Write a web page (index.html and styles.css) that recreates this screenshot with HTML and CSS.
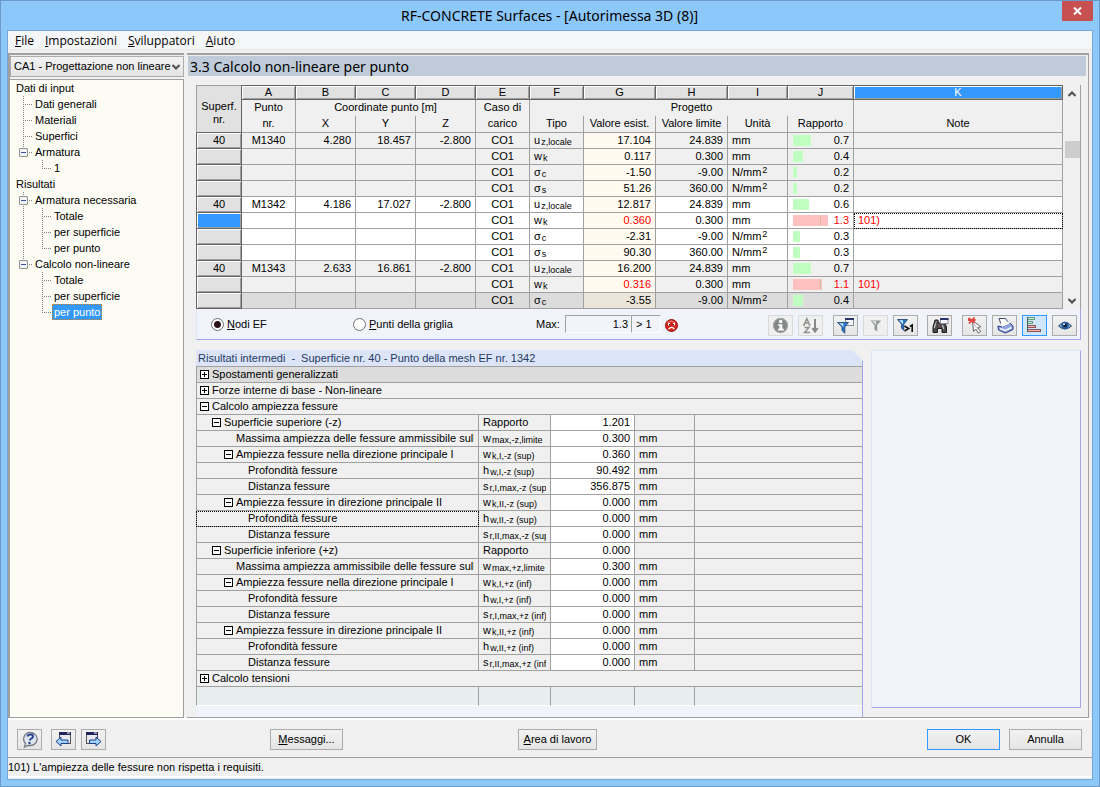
FILE: index.html
```html
<!DOCTYPE html>
<html lang="it">
<head>
<meta charset="utf-8">
<title>RF-CONCRETE Surfaces - [Autorimessa 3D (8)]</title>
<link rel="stylesheet" href="styles.css">
</head>
<body>
<div class="window">
  <header class="titlebar">
    <h1>RF-CONCRETE Surfaces - [Autorimessa 3D (8)]</h1>
    <button class="close" aria-label="Chiudi"><svg width="9" height="8" viewBox="0 0 9 8"><path d="M1 .5l7 7M8 .5l-7 7" stroke="#fff" stroke-width="2"/></svg></button>
  </header>
  <div class="client">
    <nav class="menu">
      <a href="#"><u>F</u>ile</a><a href="#"><u>I</u>mpostazioni</a><a href="#"><u>S</u>viluppatori</a><a href="#"><u>A</u>iuto</a>
    </nav>
    <div class="body">
      <aside class="side">
        <div class="combo">
          <select aria-label="Caso"><option>CA1 - Progettazione non lineare</option></select>
          <svg class="chev" width="8" height="6" viewBox="0 0 8 6"><path d="M.5 1L4 4.500 7.500 1" fill="none" stroke="#505050" stroke-width="2"/></svg>
        </div>
        <ul class="tree">
          <li>Dati di input</li>
          <li><i class="g v h"></i>Dati generali</li>
          <li><i class="g v h"></i>Materiali</li>
          <li><i class="g v h"></i>Superfici</li>
          <li><i class="g e h"><button class="exp" aria-label="Comprimi"></button></i>Armatura</li>
          <li><i class="g"></i><i class="g e h"></i>1</li>
          <li>Risultati</li>
          <li><i class="g v h"><button class="exp" aria-label="Comprimi"></button></i>Armatura necessaria</li>
          <li><i class="g v"></i><i class="g v h"></i>Totale</li>
          <li><i class="g v"></i><i class="g v h"></i>per superficie</li>
          <li><i class="g v"></i><i class="g e h"></i>per punto</li>
          <li><i class="g e h"><button class="exp" aria-label="Comprimi"></button></i>Calcolo non-lineare</li>
          <li><i class="g"></i><i class="g v h"></i>Totale</li>
          <li><i class="g"></i><i class="g v h"></i>per superficie</li>
          <li><i class="g"></i><i class="g e h"></i><span class="sel">per punto</span></li>
        </ul>
      </aside>
      <main class="main">
        <h2>3.3 Calcolo non-lineare per punto</h2>
        <section class="upper">
          <div class="gridwrap">
            <table class="grid">
              <colgroup><col class="c46"><col class="c54"><col class="c60"><col class="c60"><col class="c60"><col class="c54"><col class="c54"><col class="c72"><col class="c72"><col class="c60"><col class="c66"><col></colgroup>
              <thead>
                <tr class="letters"><th class="corner" rowspan="3">Superf.<br>nr.</th><th>A</th><th>B</th><th>C</th><th>D</th><th>E</th><th>F</th><th>G</th><th>H</th><th>I</th><th>J</th><th class="on">K</th></tr>
                <tr class="h1"><th>Punto</th><th colspan="3">Coordinate punto [m]</th><th>Caso di</th><th colspan="5">Progetto</th><th></th></tr>
                <tr class="h2"><th>nr.</th><th>X</th><th>Y</th><th>Z</th><th>carico</th><th>Tipo</th><th>Valore esist.</th><th>Valore limite</th><th>Unità</th><th>Rapporto</th><th>Note</th></tr>
              </thead>
              <tbody>
                <tr><th>40</th><td class="m">M1340</td><td>4.280</td><td>18.457</td><td>-2.800</td><td class="m">CO1</td><td class="l">u<sub>z,locale</sub></td><td class="y">17.104</td><td>24.839</td><td class="l">mm</td><td><div class="r"><b style="width:18px"></b>0.7</div></td><td class="l"></td></tr>
                <tr><th></th><td></td><td></td><td></td><td></td><td class="m">CO1</td><td class="l">w<sub>k</sub></td><td class="y">0.117</td><td>0.300</td><td class="l">mm</td><td><div class="r"><b style="width:10px"></b>0.4</div></td><td class="l"></td></tr>
                <tr><th></th><td></td><td></td><td></td><td></td><td class="m">CO1</td><td class="l">σ<sub>c</sub></td><td class="y">-1.50</td><td>-9.00</td><td class="l">N/mm<sup>2</sup></td><td><div class="r"><b style="width:4px"></b>0.2</div></td><td class="l"></td></tr>
                <tr><th></th><td></td><td></td><td></td><td></td><td class="m">CO1</td><td class="l">σ<sub>s</sub></td><td class="y">51.26</td><td>360.00</td><td class="l">N/mm<sup>2</sup></td><td><div class="r"><b style="width:4px"></b>0.2</div></td><td class="l"></td></tr>
                <tr class="w"><th>40</th><td class="m">M1342</td><td>4.186</td><td>17.027</td><td>-2.800</td><td class="m">CO1</td><td class="l">u<sub>z,locale</sub></td><td class="y">12.817</td><td>24.839</td><td class="l">mm</td><td><div class="r"><b style="width:16px"></b>0.6</div></td><td class="l"></td></tr>
                <tr class="w"><th class="on"></th><td></td><td></td><td></td><td></td><td class="m">CO1</td><td class="l">w<sub>k</sub></td><td class="y red">0.360</td><td>0.300</td><td class="l">mm</td><td class="red"><div class="r"><b class="over" style="width:35px"></b>1.3</div></td><td class="l red cur">101)</td></tr>
                <tr class="w"><th></th><td></td><td></td><td></td><td></td><td class="m">CO1</td><td class="l">σ<sub>c</sub></td><td class="y">-2.31</td><td>-9.00</td><td class="l">N/mm<sup>2</sup></td><td><div class="r"><b style="width:7px"></b>0.3</div></td><td class="l"></td></tr>
                <tr class="w"><th></th><td></td><td></td><td></td><td></td><td class="m">CO1</td><td class="l">σ<sub>s</sub></td><td class="y">90.30</td><td>360.00</td><td class="l">N/mm<sup>2</sup></td><td><div class="r"><b style="width:7px"></b>0.3</div></td><td class="l"></td></tr>
                <tr><th>40</th><td class="m">M1343</td><td>2.633</td><td>16.861</td><td>-2.800</td><td class="m">CO1</td><td class="l">u<sub>z,locale</sub></td><td class="y">16.200</td><td>24.839</td><td class="l">mm</td><td><div class="r"><b style="width:18px"></b>0.7</div></td><td class="l"></td></tr>
                <tr><th></th><td></td><td></td><td></td><td></td><td class="m">CO1</td><td class="l">w<sub>k</sub></td><td class="y red">0.316</td><td>0.300</td><td class="l">mm</td><td class="red"><div class="r"><b class="over" style="width:29px"></b>1.1</div></td><td class="l red">101)</td></tr>
                <tr class="d"><th></th><td></td><td></td><td></td><td></td><td class="m">CO1</td><td class="l">σ<sub>c</sub></td><td class="y">-3.55</td><td>-9.00</td><td class="l">N/mm<sup>2</sup></td><td><div class="r"><b style="width:10px"></b>0.4</div></td><td class="l"></td></tr>
              </tbody>
            </table>
            <div class="scroll">
              <svg width="8" height="6" viewBox="0 0 8 6"><path d="M.5 5L4 1.500 7.500 5" fill="none" stroke="#505050" stroke-width="2"/></svg>
              <div class="thumb"></div>
              <svg width="8" height="6" viewBox="0 0 8 6"><path d="M.5 1L4 4.500 7.500 1" fill="none" stroke="#505050" stroke-width="2"/></svg>
            </div>
          </div>
          <div class="controls">
            <label class="opt first"><input type="radio" name="src" checked><span><u>N</u>odi EF</span></label>
            <label class="opt second"><input type="radio" name="src"><span><u>P</u>unti della griglia</span></label>
            <label class="max" for="max">Max:</label>
            <input class="val" id="max" value="1.3" readonly>
            <output class="lim">&gt; 1</output>
            <svg class="face" width="13" height="13" viewBox="0 0 13 13"><circle cx="6.500" cy="6.500" r="6" fill="#d8221c" stroke="#96100c"/><path d="M2.500 3.500Q6 .5 10 3.500" stroke="#ff9a8c" fill="none"/><rect x="3" y="4" width="2" height="2.500" fill="#fff"/><rect x="8" y="4" width="2" height="2.500" fill="#fff"/><path d="M4 5h1v1.500H4zM8 5h1v1.500H8z" fill="#222"/><path d="M3.500 10.200Q6.500 6.600 9.500 10.200" fill="none" stroke="#fff" stroke-width="1.300"/></svg>
            <div class="tools">
              <button class="tb off" aria-label="Informazioni"><svg width="18" height="17" viewBox="0 0 18 17"><circle cx="8.500" cy="8.500" r="7.500" fill="#858985"/><circle cx="8.500" cy="8.500" r="7" fill="none" stroke="#a9ada9"/><circle cx="8.700" cy="4.500" r="1.800" fill="#fff"/><path d="M6 7.200h4.300v4.600h1.500v1.600H6v-1.600h1.500V8.800H6z" fill="#fff"/></svg></button>
              <button class="tb off" aria-label="Ordina"><svg width="18" height="17" viewBox="0 0 18 17"><path d="M2 8L4.800 1.500 7.600 8M3 6h3.600M1 8h2M6.500 8h2M2.500 10.500H7L2.500 15.500h5.500" fill="none" stroke="#8d918a" stroke-width="1.400"/><path d="M13 2v12M10.300 11L13 14.500l2.700-3.500" fill="none" stroke="#858985" stroke-width="2"/></svg></button>
              <button class="tb g10" aria-label="Filtro"><svg width="18" height="17" viewBox="0 0 18 17"><rect x="8.500" y="1.500" width="8" height="7" fill="#f4f4fc" stroke="#8a8c98"/><rect x="8" y="1" width="9" height="2" fill="#2c356a"/><path d="M0.500 5.500h11L7.800 10v6.200L5 13.500V10z" fill="#2a78c8" stroke="#1c3f6c" stroke-width=".8"/><path d="M2.200 6.200h4L6.500 10z" fill="#c4e8ff"/></svg></button>
              <button class="tb off" aria-label="Rimuovi filtro"><svg width="18" height="17" viewBox="0 0 18 17"><path d="M3.500 3.500h10.500l-3.800 4.700v6.300l-2.700-2V8.200z" fill="#929692"/><path d="M5.200 4.300h4L9.200 8z" fill="#e4e6e4"/></svg></button>
              <button class="tb" aria-label="Filtro maggiore di 1"><svg width="18" height="17" viewBox="0 0 18 17"><path d="M.5 2.500h10L6.800 7.200v6l-2.300-2v-4z" fill="#2a78c8" stroke="#1c3f6c" stroke-width=".8"/><path d="M2 3.200h4L6 7.200z" fill="#c4e8ff"/><path d="M7.500 9l4.200 2.500-4.200 2.500M13 9.500l2.200-1.500v7" fill="none" stroke="#111" stroke-width="1.600"/></svg></button>
              <button class="tb g9" aria-label="Cerca"><svg width="18" height="17" viewBox="0 0 18 17"><path d="M4 3h3l.5 3h2l.5-3h3l2.500 7v5.500h-4.500v-4H6.500v4H2V10z" fill="#4a4a4e" stroke="#1c1c1e"/><path d="M4.800 6L3.300 11M11.500 8l1.200 4M5.200 4v1" stroke="#c4c4c8" stroke-width="1.200"/><path d="M7.300 7.500h2.200v2.200H7.300z" fill="#7b4b45"/><rect x="9.500" y="1.500" width="7.500" height="5" fill="#f6f8ff" stroke="#8a8c98"/><rect x="9" y="1" width="8.500" height="2" fill="#2c356a"/></svg></button>
              <button class="tb g10" aria-label="Seleziona"><svg width="18" height="17" viewBox="0 0 18 17"><path d="M6.500 3.500l8.300 6.300-2.800.7 2.600 4-2.200 1.600-2.600-4-2.300 2.400z" fill="#fafafa" stroke="#666" stroke-width="1"/><path d="M8 7l4.500 6" stroke="#b8b8b8"/><path d="M2.500 1l6 5M8.500 .5L3 6.500M2 3h7.500" stroke="#e0443a" stroke-width="1.800"/></svg></button>
              <button class="tb" aria-label="Stampa"><svg width="18" height="17" viewBox="0 0 18 17"><path d="M3 1.500h6.500l4 5.500-7.500 3z" fill="#fff" stroke="#444a70"/><path d="M2 9l4 1 8-4 3 3v3.500L9.500 16 2.500 13z" fill="#93a5e0" stroke="#2a3a80"/><path d="M4 6.500l8-2 2 2-8 3.500z" fill="#fff"/><path d="M4 11.500l5.500 2 6-3" fill="none" stroke="#f4f6ff" stroke-width="1.500"/></svg></button>
              <button class="tb act" aria-label="Barre"><svg width="18" height="17" viewBox="0 0 18 17"><path d="M1.500 0v15" stroke="#44605a"/><path d="M2 1.500h7M2 5.500h5" stroke="#6a9a80" stroke-width="3"/><path d="M2 1.500h6M2 5.500h4" stroke="#c0ecd0"/><path d="M2 9.500h8M2 13.500h13" stroke="#8a5558" stroke-width="3"/><path d="M2 9.500h7M2 13.500h12" stroke="#ffb4b4"/></svg></button>
              <button class="tb" aria-label="Visualizza"><svg width="18" height="17" viewBox="0 0 18 17"><path d="M2.500 9Q9 1.500 15.500 9 9 15 2.500 9z" fill="#8fb4da" stroke="#284668"/><circle cx="9" cy="8.500" r="3.700" fill="#245c9c"/><circle cx="9" cy="8.500" r="1.800" fill="#0c1830"/><circle cx="8" cy="7.300" r="1" fill="#e8f6ff"/></svg></button>
            </div>
          </div>
        </section>
        <div class="lower">
          <section class="detail">
            <h3><span>Risultati intermedi</span><span>-</span><span>Superficie nr. 40 - Punto della mesh EF nr. 1342</span></h3>
            <table class="props">
              <colgroup><col class="c283"><col class="c72"><col class="c84"><col class="c60"><col></colgroup>
              <tbody>
                <tr class="d"><td colspan="5"><div class="n"><button class="pm plus" aria-label="Espandi"></button>Spostamenti generalizzati</div></td></tr>
                <tr><td colspan="5"><div class="n"><button class="pm plus" aria-label="Espandi"></button>Forze interne di base - Non-lineare</div></td></tr>
                <tr><td colspan="5"><div class="n"><button class="pm" aria-label="Comprimi"></button>Calcolo ampiezza fessure</div></td></tr>
                <tr><td><div class="n n1"><button class="pm" aria-label="Comprimi"></button>Superficie superiore (-z)</div></td><td>Rapporto</td><td class="v">1.201</td><td></td><td></td></tr>
                <tr><td><div class="n n3">Massima ampiezza delle fessure ammissibile sulla superficie</div></td><td><div class="s">w<sub>max,-z,limite</sub></div></td><td class="v">0.300</td><td>mm</td><td></td></tr>
                <tr><td><div class="n n2"><button class="pm" aria-label="Comprimi"></button>Ampiezza fessure nella direzione principale I</div></td><td><div class="s">w<sub>k,I,-z (sup)</sub></div></td><td class="v">0.360</td><td>mm</td><td></td></tr>
                <tr><td><div class="n n4">Profondità fessure</div></td><td><div class="s">h<sub>w,I,-z (sup)</sub></div></td><td class="v">90.492</td><td>mm</td><td></td></tr>
                <tr><td><div class="n n4">Distanza fessure</div></td><td><div class="s">s<sub>r,I,max,-z (sup)</sub></div></td><td class="v">356.875</td><td>mm</td><td></td></tr>
                <tr><td><div class="n n2"><button class="pm" aria-label="Comprimi"></button>Ampiezza fessure in direzione principale II</div></td><td><div class="s">w<sub>k,II,-z (sup)</sub></div></td><td class="v">0.000</td><td>mm</td><td></td></tr>
                <tr><td class="focus"><div class="n n4">Profondità fessure</div></td><td><div class="s">h<sub>w,II,-z (sup)</sub></div></td><td class="v">0.000</td><td>mm</td><td></td></tr>
                <tr><td><div class="n n4">Distanza fessure</div></td><td><div class="s">s<sub>r,II,max,-z (sup)</sub></div></td><td class="v">0.000</td><td>mm</td><td></td></tr>
                <tr><td><div class="n n1"><button class="pm" aria-label="Comprimi"></button>Superficie inferiore (+z)</div></td><td>Rapporto</td><td class="v">0.000</td><td></td><td></td></tr>
                <tr><td><div class="n n3">Massima ampiezza ammissibile delle fessure sulla superficie</div></td><td><div class="s">w<sub>max,+z,limite</sub></div></td><td class="v">0.300</td><td>mm</td><td></td></tr>
                <tr><td><div class="n n2"><button class="pm" aria-label="Comprimi"></button>Ampiezza fessure nella direzione principale I</div></td><td><div class="s">w<sub>k,I,+z (inf)</sub></div></td><td class="v">0.000</td><td>mm</td><td></td></tr>
                <tr><td><div class="n n4">Profondità fessure</div></td><td><div class="s">h<sub>w,I,+z (inf)</sub></div></td><td class="v">0.000</td><td>mm</td><td></td></tr>
                <tr><td><div class="n n4">Distanza fessure</div></td><td><div class="s">s<sub>r,I,max,+z (inf)</sub></div></td><td class="v">0.000</td><td>mm</td><td></td></tr>
                <tr><td><div class="n n2"><button class="pm" aria-label="Comprimi"></button>Ampiezza fessure in direzione principale II</div></td><td><div class="s">w<sub>k,II,+z (inf)</sub></div></td><td class="v">0.000</td><td>mm</td><td></td></tr>
                <tr><td><div class="n n4">Profondità fessure</div></td><td><div class="s">h<sub>w,II,+z (inf)</sub></div></td><td class="v">0.000</td><td>mm</td><td></td></tr>
                <tr><td><div class="n n4">Distanza fessure</div></td><td><div class="s">s<sub>r,II,max,+z (inf)</sub></div></td><td class="v">0.000</td><td>mm</td><td></td></tr>
                <tr><td colspan="5"><div class="n"><button class="pm plus" aria-label="Espandi"></button>Calcolo tensioni</div></td></tr>
                <tr class="blank"><td></td><td></td><td></td><td></td><td></td></tr>
              </tbody>
            </table>
          </section>
          <section class="preview"></section>
        </div>
      </main>
    </div>
    <footer class="actions">
      <button class="tb" aria-label="Guida"><svg width="18" height="17" viewBox="0 0 18 17"><path d="M9 1.500a7 6.500 0 1 1-1.500 12.800L3.500 16l1-3.500A6.500 6.500 0 0 1 9 1.500z" fill="#dfe5ee" stroke="#777c86" stroke-width="1.300"/><path d="M6.500 5.500q.5-2 3-2 2.700 0 2.500 2-.2 1.400-2 2.200-1 .6-1.200 1.800" fill="none" stroke="#24408c" stroke-width="1.800"/><circle cx="8.500" cy="12" r="1.200" fill="#24408c"/></svg></button>
      <button class="tb g9" aria-label="Precedente"><svg width="18" height="17" viewBox="0 0 18 17"><rect x="4.500" y="1.500" width="11" height="11" fill="#e8eaf0" stroke="#555"/><rect x="4" y="1" width="12" height="3" fill="#20265c"/><path d="M12 2h3" stroke="#fff"/><path d="M1 10.500l5-4.500v3H13v3.500H6V15z" fill="#9fd2ff" stroke="#1c3f8e"/></svg></button>
      <button class="tb" aria-label="Successivo"><svg width="18" height="17" viewBox="0 0 18 17"><rect x="1.500" y="1.500" width="11" height="11" fill="#e8eaf0" stroke="#555"/><rect x="1" y="1" width="12" height="3" fill="#20265c"/><path d="M9 2h3" stroke="#fff"/><path d="M16 10.500L11 6v3H4.500v3.500H11V15z" fill="#9fd2ff" stroke="#1c3f8e"/></svg></button>
      <button class="pb msg"><span><u>M</u>essaggi...</span></button>
      <button class="pb area"><span><u>A</u>rea di lavoro</span></button>
      <button class="pb ok">OK</button>
      <button class="pb">Annulla</button>
    </footer>
    <div class="status">101) L'ampiezza delle fessure non rispetta i requisiti.</div>
  </div>
</div>
</body>
</html>
```
FILE: styles.css
```css
* { box-sizing: border-box; }
html, body { height: 100%; }
body {
  margin: 0;
  font: 11px/15px "Liberation Sans", Arial, sans-serif;
  color: #000;
}
button, select, input { font: inherit; color: inherit; margin: 0; }
h1, h2, h3 { margin: 0; font-weight: normal; }
svg { display: block; }

.window {
  min-height: 100vh;
  display: flex;
  flex-direction: column;
  background: #8dc8fb;
  border: 1px solid #6b9bc6;
  padding: 0 6px 6px;
}
.titlebar { height: 29px; display: flex; align-items: flex-start; }
.titlebar h1 {
  flex: 1;
  padding-left: 30px;
  text-align: center;
  font: 14px/30px "Noto Sans", "Open Sans", sans-serif;
}
.close {
  width: 31px; height: 20px; padding: 0;
  display: grid; place-items: center;
  border: 0; background: #c75050;
}
.client {
  flex: 1;
  display: flex;
  flex-direction: column;
  border: 1px solid #74a8d8;
  background: #f0f0f0;
}
.menu {
  display: flex; gap: 11px;
  height: 19px; padding-left: 7px;
  background: #f5f6f7;
  border-bottom: 1px solid #e8e8e8;
  font: 12px/20px "Open Sans", "Noto Sans", sans-serif;
}
.menu a { color: #000; text-decoration: none; }

.body { flex: 1; display: flex; gap: 3px; padding-top: 3px; }
.side {
  width: 176px; flex: none;
  display: flex; flex-direction: column;
  border-top: 2px solid #a0a0a0;
  border-left: 2px solid #a0a0a0;
}
.combo { position: relative; margin: 1px 0 2px; }
.combo select {
  display: block;
  appearance: none;
  width: 174px; height: 21px;
  padding: 0 0 0 3px;
  border: 1px solid #acacac; border-radius: 0;
  background: linear-gradient(#f2f2f2, #e4e4e4);
}
.chev { position: absolute; right: 4px; top: 8px; }
.tree {
  flex: 1;
  margin: 0; padding: 0 0 0 4px;
  list-style: none;
  background: #fcfcf4;
  border: solid #a0a0a0; border-width: 1px 1px 1px 0;
}
.tree li { height: 16px; line-height: 16px; padding-left: 2px; display: flex; white-space: nowrap; }
.g { width: 19px; flex: none; display: flex; align-items: center; padding-left: 3px; }
.g {
  --dv: repeating-linear-gradient(#808080 0 1px, transparent 1px 2px);
  --dh: repeating-linear-gradient(90deg, #808080 0 1px, transparent 1px 2px);
}
.g.v { background: var(--dv) 7px 0 / 1px 100% no-repeat; }
.g.v.h { background: var(--dv) 7px 0 / 1px 100% no-repeat, var(--dh) 7px 8px / 9px 1px no-repeat; }
.g.e.h { background: var(--dv) 7px 0 / 1px 8px no-repeat, var(--dh) 7px 8px / 9px 1px no-repeat; }
.exp {
  width: 9px; height: 9px; padding: 0;
  border: 1px solid #919191; border-radius: 1px;
  background: linear-gradient(#3a50b0, #3a50b0) center / 5px 1px no-repeat, #f4f4f4;
}
.sel { background: #3399ff; color: #fff; outline: 1px dotted #d08030; outline-offset: -1px; padding: 0 2px; margin-left: -2px; }

.main {
  flex: 1; min-width: 0;
  display: flex; flex-direction: column;
  border: solid #a0a0a0; border-width: 2px 1px 1px 0;
  margin-right: 3px;
  padding: 1px 2px 0 1px;
}
.main h2 {
  height: 20px; padding-left: 2px;
  background: #bfcbd9;
  font: 14px/22px "Noto Sans", "Open Sans", sans-serif;
}
.upper { margin: 9px 5px 0 8px; }
.gridwrap { display: flex; border-right: 1px solid #a0a0a0; }
table { border-collapse: separate; border-spacing: 0; table-layout: fixed; }
.grid { flex: 1; min-width: 0; width: 100%; }
.c46 { width: 46px; } .c54 { width: 54px; } .c60 { width: 60px; } .c66 { width: 66px; }
.c72 { width: 72px; } .c84 { width: 84px; } .c283 { width: 283px; }
.grid th, .grid td { padding: 0; font-weight: normal; white-space: nowrap; }
.grid thead th { height: 16px; line-height: 14px; border-right: 1px solid #a0a0a0; vertical-align: top; }
.grid .letters th {
  height: 15px; line-height: 13px;
  background: #e1e1e1;
  border: solid #646464; border-width: 1px 1px 1px 0;
  box-shadow: inset 1px 1px #fff, inset -1px -1px #a0a0a0;
}
.grid .letters .corner { border: 1px solid #a0a0a0; border-bottom-color: #646464; border-right-color: #646464; box-shadow: none; padding-top: 8px; vertical-align: middle; }
.grid .on, .grid .letters .on, .grid tbody .on { background: #3399ff; color: #fff; }
.grid .h2 th { height: 17px; border-bottom: 1px solid #a0a0a0; }
.grid tbody th {
  height: 16px; line-height: 14px;
  vertical-align: top;
  background: #e1e1e1;
  border: solid #646464; border-width: 0 1px 1px 1px;
  box-shadow: inset 1px 1px #fff, inset -1px -1px #a0a0a0;
}
.grid td {
  height: 16px; line-height: 15px;
  padding: 0 4px;
  text-align: right;
  border: solid #a0a0a0; border-width: 0 1px 1px 0;
  background: #f0f0f0;
}
.grid .w td { background: #fff; }
.grid .d td { background: #dcdcdc; }
.grid td.y { background: #fffaf0; }
.grid .d td.y { background: #ebe5da; }
.grid td.m { text-align: center; }
.grid td.l { text-align: left; }
.red { color: #ff0000; }
.grid .cur { outline: 1px dotted #000; outline-offset: -1px; }
.r { display: flex; justify-content: space-between; align-items: center; padding-left: 1px; }
.r b { height: 11px; background: #c0ffc0; }
.r .over { background: linear-gradient(#d0c0a0, #d0c0a0) 27px 0 / 1px 100% no-repeat, #ffc0c0; }
sub, sup { font-size: 9px; line-height: 0; margin-left: 1px; }
sub { vertical-align: -1px; }
sup { vertical-align: 3px; }

.scroll {
  width: 17px; flex: none;
  display: flex; flex-direction: column; align-items: center;
  padding: 6px 0 5px;
}
.thumb { width: 15px; height: 17px; margin: 44px 0 auto 1px; background: #cdcdcd; }

.controls {
  display: flex; align-items: center;
  height: 31px;
  background: #f0f4fa;
  border: solid #a5a5ee; border-width: 0 1px 1px 0;
  border-left: 1px solid #dce5f7;
}
.opt { display: flex; align-items: center; gap: 3px; }
.opt.first { margin-left: 14px; width: 142px; }
.opt.second { width: 183px; }
.opt input {
  appearance: none;
  width: 13px; height: 13px;
  border: 1px solid #707070; border-radius: 50%;
  background: #fff;
}
.opt input:checked { background: radial-gradient(circle, #2a1018 0 3px, #fff 4px); }
.max { width: 29px; }
.val, .lim {
  height: 18px; line-height: 16px;
  border: 1px solid; border-color: #a0a0a0 #fff #fff #a0a0a0;
  background: #f0f4fa;
}
.val { width: 66px; padding: 0 2px; text-align: right; }
.lim { width: 30px; padding-left: 4px; }
.face { margin: 2px 0 0 4px; }
.tools { margin: 2px 3px 0 auto; display: flex; gap: 5px; }
.tb {
  width: 25px; height: 21px; padding: 0;
  display: grid; place-items: center;
  border: 1px solid #acacac;
  background: linear-gradient(#f2f2f2, #e5e5e5);
}
.tb.off { border-color: #dadada; background: #f0f0f0; }
.tb.act { border-color: #3399ff; background: #cfe7fb; }
.tools .g10 { margin-left: 5px; }
.tools .g9 { margin-left: 4px; }

.lower { flex: 1; display: flex; gap: 8px; margin: 10px 5px 0 8px; }
.detail {
  flex: 1; min-width: 0;
  background: linear-gradient(#a5a5ee, #a5a5ee) right 10px / 1px 100% no-repeat, #f0f4fa;
  clip-path: polygon(0 0, calc(100% - 11px) 0, 100% 11px, 100% 100%, 0 100%);
}
.detail h3 {
  display: flex; gap: 6px;
  height: 16px; line-height: 16px; padding-left: 2px;
  margin-right: 1px;
  background: #dce5f7; color: #1f3864;
  font-size: 11px;
}
.props { width: calc(100% - 1px); border-top: 1px solid #a0a0a0; }
.props td {
  height: 16px; padding: 0 4px;
  border: solid #a0a0a0; border-width: 0 1px 1px 0;
  background: #f0f0f0;
  white-space: nowrap;
}
.props td:first-child { border-left-width: 1px; }
.props td:last-child { border-right-width: 0; }
.props .d td { background: #dcdcdc; }
.props td.v { background: #fff; text-align: right; }
.props .blank td { height: 19px; background: #e8eeee; border-bottom-color: #fff; }
.n { display: flex; align-items: center; gap: 3px; overflow: hidden; height: 15px; margin-left: -1px; }
.n1 { padding-left: 12px; }
.n2 { padding-left: 24px; }
.n3 { padding-left: 36px; }
.n4 { padding-left: 48px; }
.s { overflow: hidden; height: 15px; }
.focus { outline: 1px dotted #000; outline-offset: -1px; }
.pm {
  width: 9px; height: 9px; padding: 0; flex: none;
  border: 1px solid #000;
  background: linear-gradient(#000, #000) center / 5px 1px no-repeat, #fff;
}
.pm.plus { background: linear-gradient(#000, #000) center / 5px 1px no-repeat, linear-gradient(#000, #000) center / 1px 5px no-repeat, #fff; }
.preview {
  width: 210px; flex: none;
  margin-bottom: 9px;
  background: #f0f4fa;
  border: 1px solid #dce5f7;
  border-right-color: #a5a5ee; border-bottom-color: #a5a5ee;
}

.actions {
  display: flex; align-items: center; gap: 5px;
  height: 39px;
  padding: 2px 10px 0 9px;
  border-top: 2px solid #fff;
}
.actions .g9 { margin-left: 4px; }
.pb {
  width: 73px; height: 21px; padding: 0;
  border: 1px solid #acacac;
  background: linear-gradient(#f2f2f2, #e5e5e5);
}
.msg { margin-left: 159px; }
.area { width: 79px; margin-left: 170px; }
.ok { margin-left: auto; margin-right: 4px; border-color: #3399ff; }
.status {
  height: 20px; line-height: 19px;
  border-top: 1px solid #a0a0a0;
  border-bottom: 1px solid #fff;
  margin-bottom: 2px;
}
```
